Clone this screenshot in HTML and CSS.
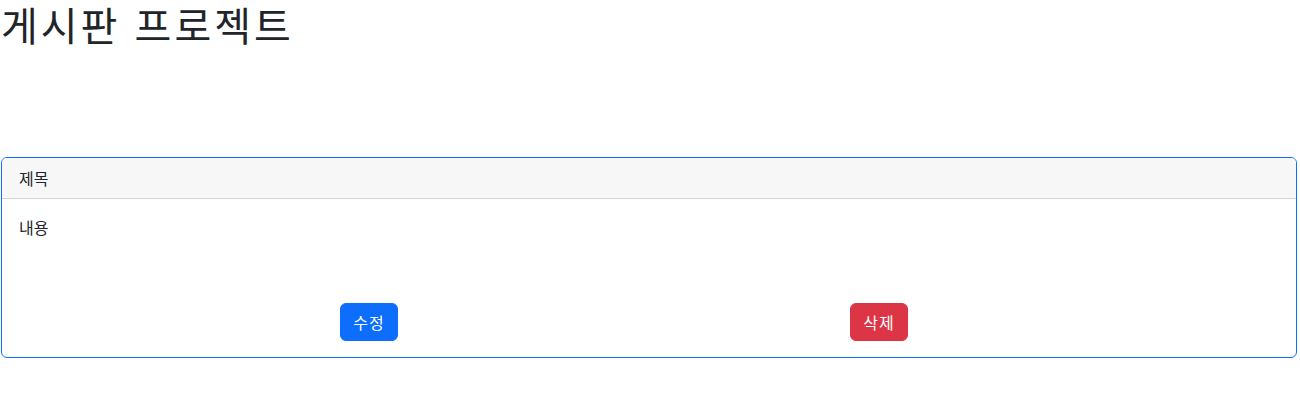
FILE: index.html
```html
<!DOCTYPE html>
<html lang="ko">
<head>
<meta charset="utf-8">
<title>게시판 프로젝트</title>
<link rel="stylesheet" href="styles.css">
</head>
<body>
<h1 class="page-title">게시판 프로젝트</h1>
<div class="card">
  <div class="card-header">제목</div>
  <div class="card-body">
    <p class="card-text">내용</p>
    <div class="actions">
      <button class="btn btn-primary">수정</button>
      <button class="btn btn-danger">삭제</button>
    </div>
  </div>
</div>
</body>
</html>
```
FILE: styles.css
```css
* { box-sizing: border-box; }
html, body { margin: 0; padding: 0; }
body {
  font-family: "Noto Sans CJK KR", "Noto Sans", sans-serif;
  font-size: 16px;
  line-height: 1.5;
  color: #212529;
  background: #fff;
}
.page-title {
  margin: 0 0 8px 0;
  padding-left: 1px;
  font-size: 40px;
  font-weight: 400;
  line-height: 1.2;
  letter-spacing: 3px;
  white-space: nowrap;
}
.card {
  margin: 109px 3px 0 1px;
  border: 1px solid #0d6efd;
  border-radius: 6px;
  overflow: hidden;
}
.card-header {
  padding: 8px 17px;
  background: #f7f7f7;
  border-bottom: 1px solid #d2d2d2;
}
.card-body {
  padding: 16px 17px;
}
.card-text { margin: 0 0 64px 0; }
.actions {
  display: flex;
  padding-left: 321px;
  gap: 452px;
}
.btn {
  width: 58px;
  font-family: inherit;
  font-size: 16px;
  line-height: 24px;
  padding: 6px 0;
  text-align: center;
  letter-spacing: 1px;
  border: 1px solid transparent;
  border-radius: 6px;
  color: #fff;
  cursor: pointer;
}
.btn-primary { background: #0d6efd; border-color: #0d6efd; }
.btn-danger { background: #dc3545; border-color: #dc3545; }
```
